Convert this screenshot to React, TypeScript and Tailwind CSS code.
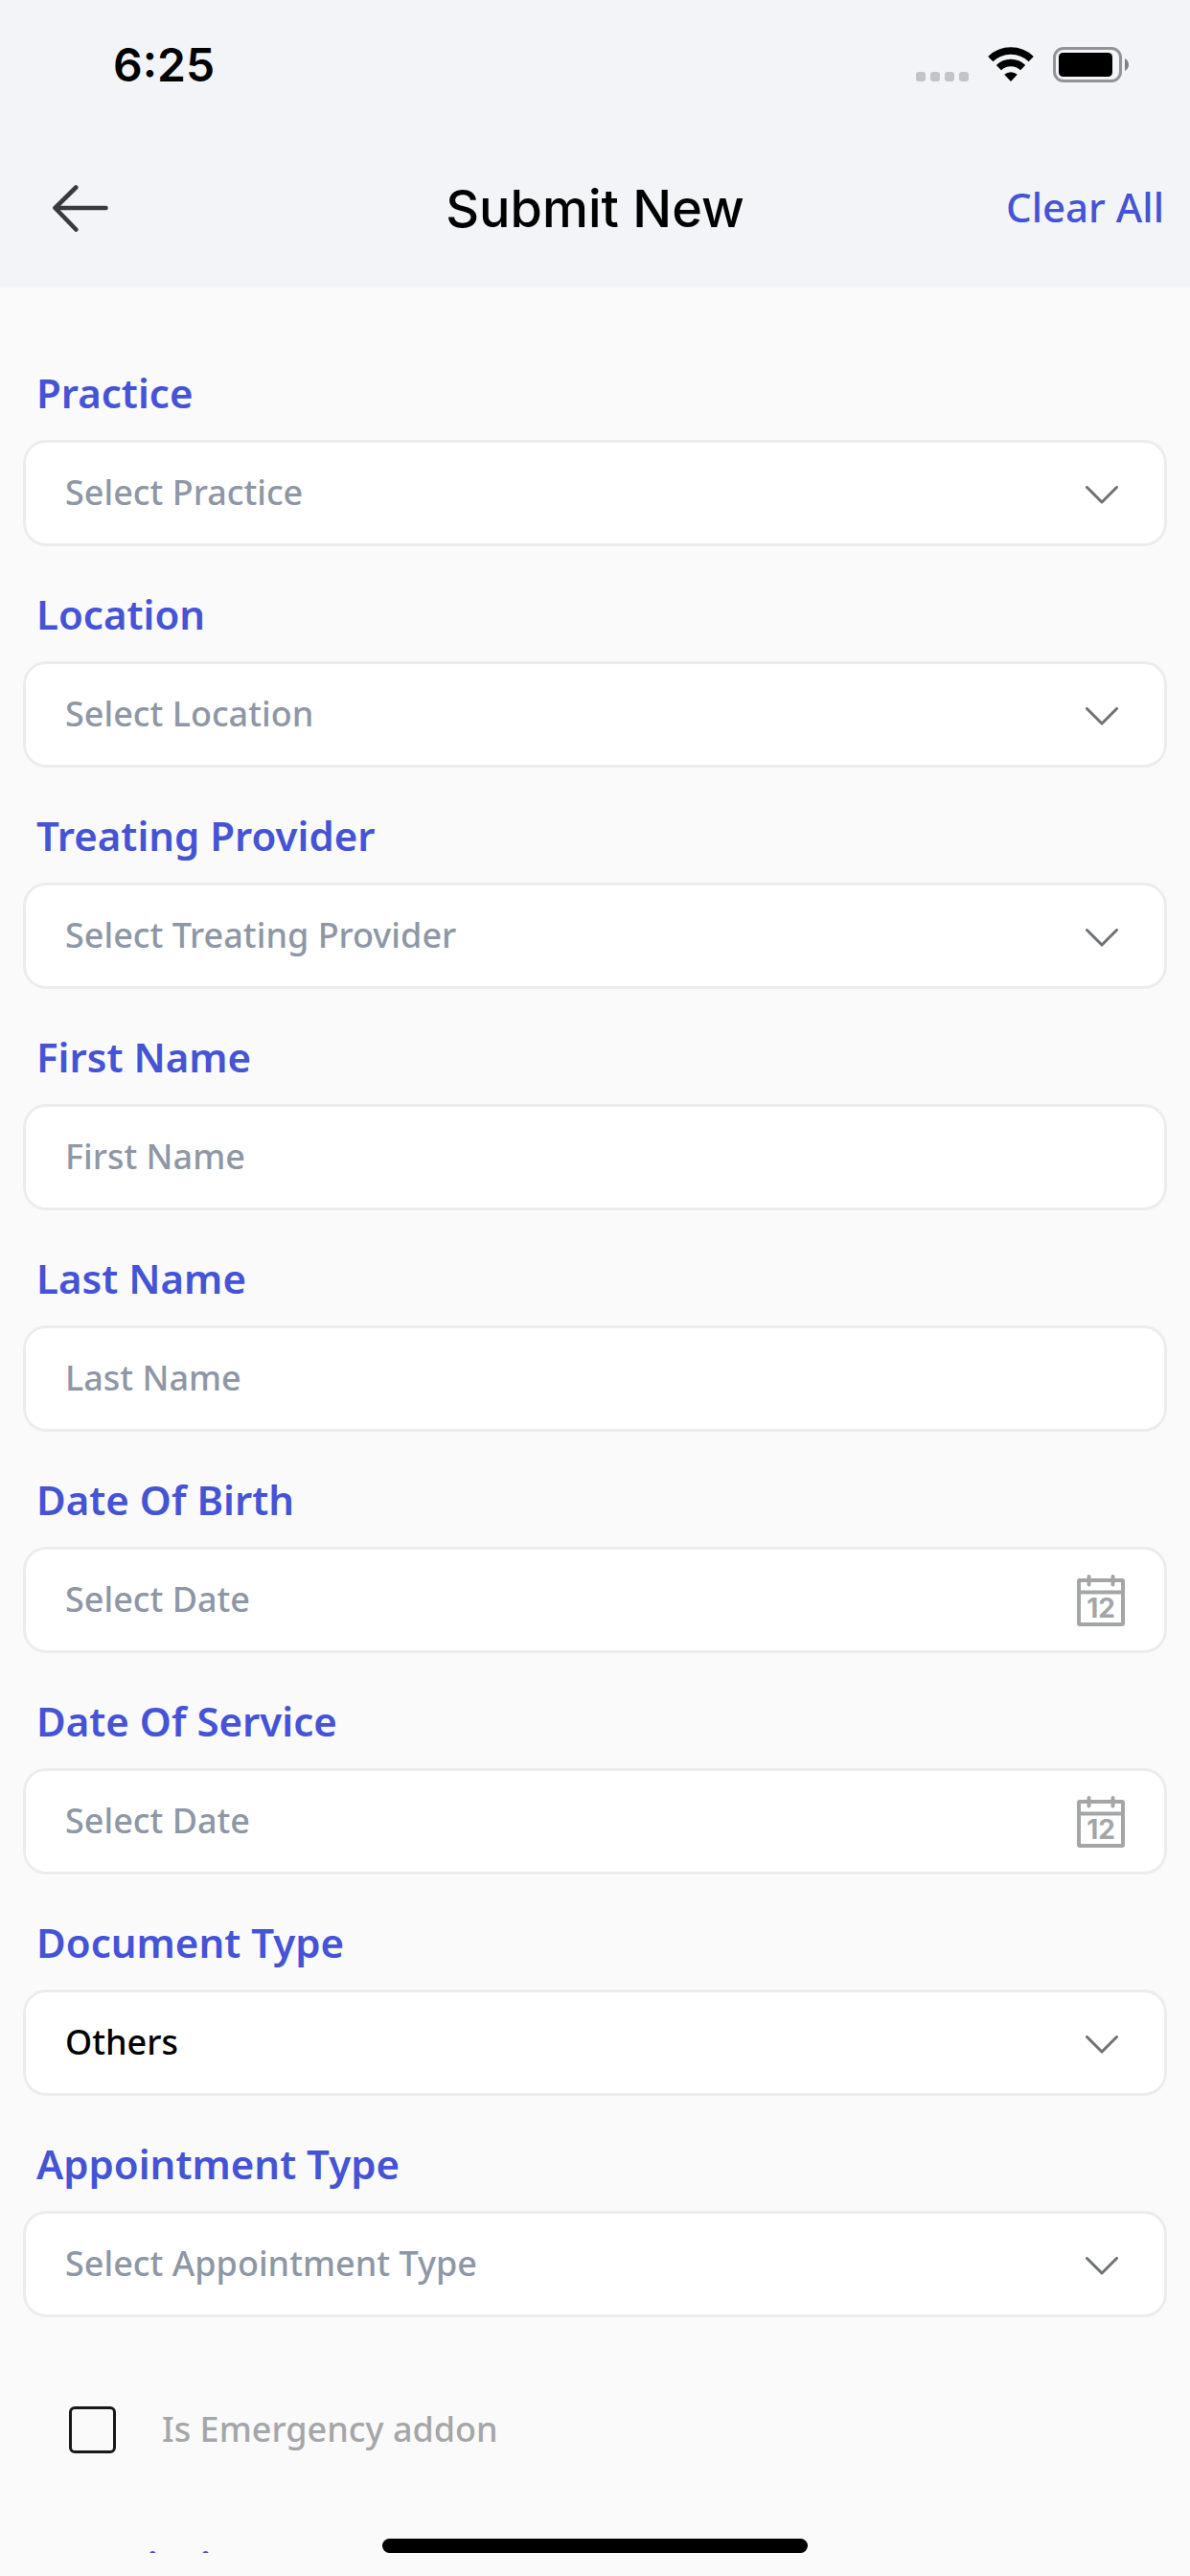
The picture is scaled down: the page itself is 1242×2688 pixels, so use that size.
// App.tsx
import React, { useState } from "react";

type FieldType = "select" | "text" | "date";

interface Field {
  id: string;
  label: string;
  type: FieldType;
  placeholder: string;
  options?: string[];
}

const fields: Field[] = [
  { id: "practice", label: "Practice", type: "select", placeholder: "Select Practice" },
  { id: "location", label: "Location", type: "select", placeholder: "Select Location" },
  { id: "provider", label: "Treating Provider", type: "select", placeholder: "Select Treating Provider" },
  { id: "firstName", label: "First Name", type: "text", placeholder: "First Name" },
  { id: "lastName", label: "Last Name", type: "text", placeholder: "Last Name" },
  { id: "dob", label: "Date Of Birth", type: "date", placeholder: "Select Date" },
  { id: "dos", label: "Date Of Service", type: "date", placeholder: "Select Date" },
  { id: "docType", label: "Document Type", type: "select", placeholder: "Select Document Type", options: ["Others"] },
  { id: "apptType", label: "Appointment Type", type: "select", placeholder: "Select Appointment Type" },
];

const initialValues: Record<string, string> = { docType: "Others" };

function StatusBar() {
  return (
    <div className="flex h-[135px] items-center justify-between pl-[118px] pr-[63px] font-['Inter',sans-serif]">
      <span className="text-5xl font-semibold text-black">6:25</span>
      <div className="flex items-center gap-5">
        <svg width="55" height="37" viewBox="0 0 55 37" fill="#c3c4c8" aria-hidden="true">
          <rect x="0" y="26" width="10" height="10" rx="3" />
          <rect x="15" y="26" width="10" height="10" rx="3" />
          <rect x="30" y="26" width="10" height="10" rx="3" />
          <rect x="45" y="26" width="10" height="10" rx="3" />
        </svg>
        <svg width="48" height="37" viewBox="0 0 48 37" aria-hidden="true">
          <g fill="none" stroke="#000" strokeWidth="7.4">
            <path d="M2.8 12.6a30.5 30.5 0 0 1 42.4 0" />
            <path d="M11.4 21.6a18.2 18.2 0 0 1 25.2 0" />
          </g>
          <path d="M24 36l-6.8-7.2a10 10 0 0 1 13.6 0z" fill="#000" />
        </svg>
        <svg width="80" height="37" viewBox="0 0 80 37" aria-hidden="true">
          <rect x="1.5" y="1.5" width="69" height="34" rx="9.5" fill="none" stroke="#929396" strokeWidth="3" />
          <rect x="6" y="6" width="56" height="25" rx="4.5" fill="#000" />
          <path d="M75 12c5.3 2.6 5.3 10.4 0 13z" fill="#808184" />
        </svg>
      </div>
    </div>
  );
}

function ChevronIcon() {
  return (
    <svg width="34" height="19" viewBox="0 0 34 19" fill="none" stroke="#6e7277" strokeWidth="3" strokeLinecap="round" strokeLinejoin="round" aria-hidden="true">
      <path d="M1.5 1.5L17 17L32.5 1.5" />
    </svg>
  );
}

function CalendarIcon() {
  return (
    <svg width="50" height="54" viewBox="0 0 50 54" aria-hidden="true">
      <g fill="none" stroke="#a3a5a7" strokeWidth="4">
        <rect x="2" y="6" width="46" height="46" rx="1" />
        <path d="M2 18.5h46" />
        <path d="M12.5 2v8.500M37.500 2v8.500" strokeLinecap="round" />
      </g>
      <text x="25" y="45" textAnchor="middle" fill="#a3a5a7" className="font-['Inter',sans-serif] text-[28px] font-bold">
        12
      </text>
    </svg>
  );
}

interface FormFieldProps {
  field: Field;
  value: string;
  onChange: (value: string) => void;
}

function FormField({ field, value, onChange }: FormFieldProps) {
  const control =
    "col-start-1 row-start-1 h-full w-full appearance-none bg-transparent px-[41px] pb-0.5 text-4xl leading-[60px] font-medium outline-none placeholder:text-[#8e97a5] placeholder:opacity-100";

  return (
    <div>
      <label htmlFor={field.id} className="mb-[19px] block px-3.5 text-[42px] leading-[60px] font-semibold text-[#4553d5]">
        {field.label}
      </label>
      <div className="grid h-[111px] items-center rounded-3xl border-3 border-[#ebeded] bg-white">
        {field.type === "select" ? (
          <>
            <select
              id={field.id}
              value={value}
              onChange={(e) => onChange(e.target.value)}
              className={`${control} ${value ? "text-black" : "text-[#8e97a5]"}`}
            >
              <option value="">{field.placeholder}</option>
              {field.options?.map((option) => (
                <option key={option} value={option}>
                  {option}
                </option>
              ))}
            </select>
            <span className="pointer-events-none col-start-1 row-start-1 mr-12 justify-self-end pt-1">
              <ChevronIcon />
            </span>
          </>
        ) : (
          <input
            id={field.id}
            type="text"
            value={value}
            placeholder={field.placeholder}
            onChange={(e) => onChange(e.target.value)}
            className={`${control} text-black`}
          />
        )}
        {field.type === "date" && (
          <button type="button" aria-label={`Open calendar for ${field.label}`} className="col-start-1 row-start-1 mr-[41px] justify-self-end">
            <CalendarIcon />
          </button>
        )}
      </div>
    </div>
  );
}

export default function App() {
  const [values, setValues] = useState<Record<string, string>>(initialValues);
  const [emergency, setEmergency] = useState(false);

  const setValue = (id: string, value: string) => setValues((prev) => ({ ...prev, [id]: value }));

  const clearAll = () => {
    setValues(initialValues);
    setEmergency(false);
  };

  return (
    <div className="relative flex h-screen flex-col bg-[#fafafa] pb-6 font-['Noto_Sans',sans-serif]">
      <header className="shrink-0 bg-[#f3f4f8]">
        <StatusBar />
        <div className="grid h-[165px] grid-cols-[1fr_auto_1fr] items-center px-[27px]">
          <button type="button" aria-label="Go back" className="ml-7 justify-self-start">
            <svg width="60" height="50" viewBox="0 0 60 50" fill="none" stroke="#373b40" strokeWidth="4.6" strokeLinecap="round" strokeLinejoin="round" aria-hidden="true">
              <path d="M24.3 2.500L2.500 24L24.3 46.500M2.500 24H55.500" />
            </svg>
          </button>
          <h1 className="font-['Inter',sans-serif] text-[54px] font-medium text-black">Submit New</h1>
          <button type="button" onClick={clearAll} className="justify-self-end pb-1 text-[42px] font-medium text-[#4553d5]">
            Clear All
          </button>
        </div>
      </header>

      <main className="min-h-0 flex-1 overflow-y-auto [scrollbar-width:none]">
        <form className="flex flex-col gap-[41px] px-6 pt-20 pb-10">
          {fields.map((field) => (
            <FormField key={field.id} field={field} value={values[field.id] ?? ""} onChange={(value) => setValue(field.id, value)} />
          ))}

          <div className="flex h-[148px] items-center gap-12 px-12 pt-1">
            <input
              id="emergency"
              type="checkbox"
              checked={emergency}
              onChange={(e) => setEmergency(e.target.checked)}
              className="size-[49px] appearance-none rounded-md border-3 border-[#17181a] checked:bg-[#4553d5]"
            />
            <label htmlFor="emergency" className="text-4xl font-medium text-[#a5a6a8]">
              Is Emergency addon
            </label>
          </div>

          <div>
            <label htmlFor="description" className="mb-[19px] block px-3.5 text-[42px] leading-[60px] font-semibold text-[#4553d5]">
              Description
            </label>
            <textarea
              id="description"
              rows={4}
              value={values.description ?? ""}
              onChange={(e) => setValue("description", e.target.value)}
              className="block w-full rounded-3xl border-3 border-[#ebeded] bg-white px-[41px] py-6 text-4xl font-medium text-black outline-none"
            />
          </div>
        </form>
      </main>

      {/* Home indicator floats over the scrolling form */}
      <div className="pointer-events-none absolute inset-x-0 bottom-6 flex justify-center">
        <div className="h-[15px] w-[444px] rounded-full bg-black" />
      </div>
    </div>
  );
}
